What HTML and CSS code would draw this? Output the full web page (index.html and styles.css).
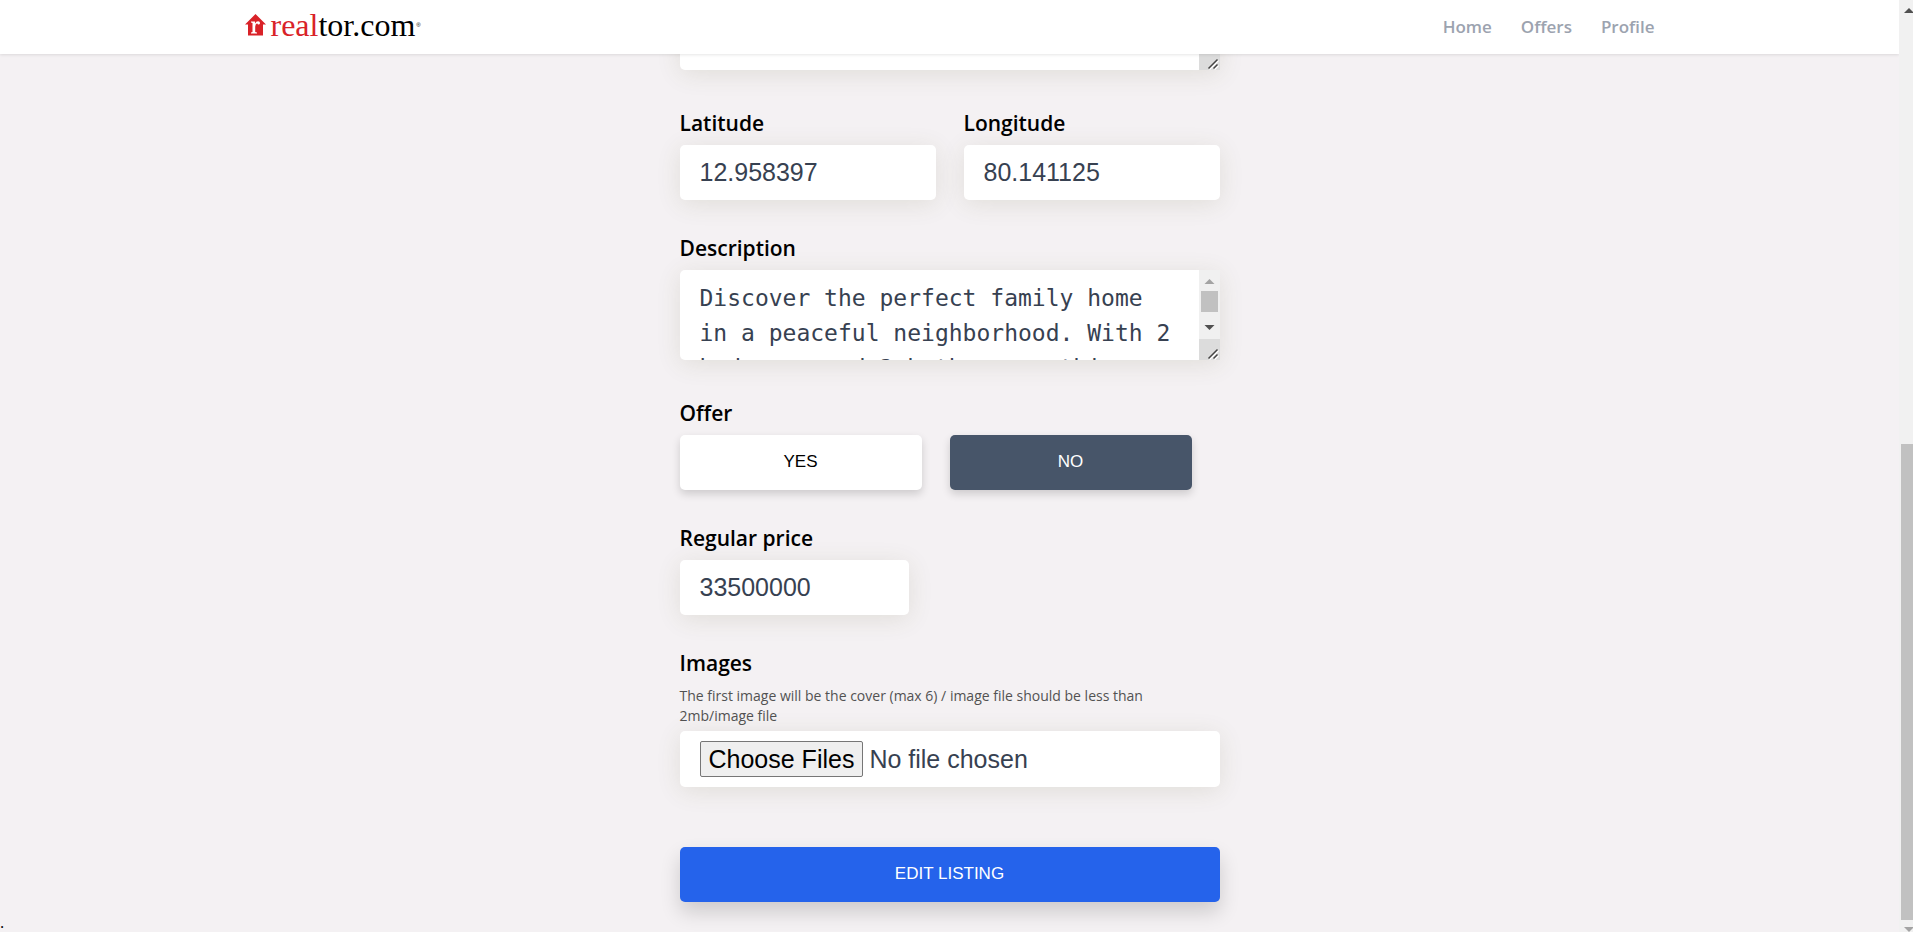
FILE: index.html
```html
<!DOCTYPE html>
<html lang="en">
<head>
<meta charset="utf-8">
<title>Edit listing</title>
<link rel="stylesheet" href="styles.css">
</head>
<body>
<div class="page">
  <header class="header">
    <div class="header-inner">
      <a class="logo" href="#" aria-label="realtor.com">
        <svg class="logo-house" viewBox="0 0 21 22" aria-hidden="true">
          <path fill="#d92228" d="M10.500 0 21 10.500H18V21.500H3V10.500H0Z"/>
          <path fill="#fff" d="M6 7.500H10V9.500Q11.200 7.200 13.200 7.300 15.200 7.500 15 9.300 14.700 10.800 13.200 10.600 12.200 10.300 12.200 9.300 10.200 10 10.200 12.800V18L12 18.500V19.500H6V18.500L7.500 18V9L6 8.500Z"/>
        </svg>
        <span class="logo-text"><span class="logo-red">real</span>tor.com</span><span class="logo-mark">®</span>
      </a>
      <nav class="nav">
        <a href="#">Home</a>
        <a href="#">Offers</a>
        <a href="#">Profile</a>
      </nav>
    </div>
  </header>
  <main class="content">
    <form class="form">
      <div class="area">
        <textarea class="area-text" aria-label="Address"></textarea>
        <div class="area-bar" aria-hidden="true">
          <svg class="grip" viewBox="0 0 21 21"><path d="M9.500 19.500 18.500 10.500M14.500 19.500 18.500 15.500" stroke="#fff" stroke-width="1.500" transform="translate(1 1)"/><path d="M9.500 19.500 18.500 10.500M14.500 19.500 18.500 15.500" stroke="#444" stroke-width="1.500"/></svg>
        </div>
      </div>

      <div class="pair after-area">
        <div class="field">
          <label for="lat">Latitude</label>
          <input class="box" id="lat" type="text" value="12.958397">
        </div>
        <div class="field">
          <label for="lng">Longitude</label>
          <input class="box" id="lng" type="text" value="80.141125">
        </div>
      </div>

      <div class="field">
        <label for="desc">Description</label>
        <div class="area">
          <textarea class="area-text" id="desc">Discover the perfect family home in a peaceful neighborhood. With 2 bedrooms and 2 bathrooms, this</textarea>
          <div class="area-bar" aria-hidden="true">
            <svg class="area-arrow" viewBox="0 0 21 21"><path d="M5.500 14 10.500 9 15.500 14Z" fill="#a3a3a3"/></svg>
            <div class="area-thumb"></div>
            <svg class="area-arrow area-arrow-down" viewBox="0 0 21 21"><path d="M5.500 9 10.500 14 15.500 9Z" fill="#505050"/></svg>
            <svg class="grip" viewBox="0 0 21 21"><path d="M9.500 19.500 18.500 10.500M14.500 19.500 18.500 15.500" stroke="#fff" stroke-width="1.500" transform="translate(1 1)"/><path d="M9.500 19.500 18.500 10.500M14.500 19.500 18.500 15.500" stroke="#444" stroke-width="1.500"/></svg>
          </div>
        </div>
      </div>

      <div class="field after-area">
        <span class="label" id="offer">Offer</span>
        <div class="choices" role="group" aria-labelledby="offer">
          <button class="choice" type="button">YES</button>
          <button class="choice choice-on" type="button">NO</button>
        </div>
      </div>

      <div class="field">
        <label for="price">Regular price</label>
        <input class="box box-price" id="price" type="text" value="33500000">
      </div>

      <div class="field">
        <label for="images">Images</label>
        <p class="hint">The first image will be the cover (max 6) / image file should be less than 2mb/image file</p>
        <input class="box box-file" id="images" type="file" multiple>
      </div>

      <button class="submit" type="submit">EDIT LISTING</button>
    </form>
    <p class="dot">.</p>
  </main>
</div>
<div class="scrollbar" aria-hidden="true">
  <svg class="scroll-arrow" viewBox="0 0 14 21"><path d="M5 13 10 8 15 13Z" fill="#505050"/></svg>
  <div class="scroll-track"><div class="scroll-thumb"></div></div>
  <svg class="scroll-arrow scroll-arrow-down" viewBox="0 0 14 12"><path d="M5 7 10 12 15 7Z" fill="#a3a3a3"/></svg>
</div>
</body>
</html>
```
FILE: styles.css
```css
* {
  box-sizing: border-box;
}

body {
  margin: 0;
  display: grid;
  grid-template-columns: minmax(0, 1fr) 14px;
  height: 100vh;
  overflow: hidden;
  background: #f4f1f3;
  color: #000;
  font-family: "Open Sans", "Noto Sans", sans-serif;
}

.page {
  height: 100vh;
  overflow: hidden;
}

.header {
  position: relative;
  z-index: 1;
  background: #fff;
  box-shadow: 0 1px 3px rgba(0, 0, 0, 0.1);
}

.header-inner {
  display: flex;
  align-items: center;
  justify-content: space-between;
  max-width: 1410px;
  height: 54px;
  margin: 0 auto;
}

.logo {
  display: flex;
  align-items: center;
  gap: 5px;
  padding-bottom: 5px;
  color: #000;
  text-decoration: none;
}

.logo-house {
  width: 21px;
  height: 22px;
}

.logo-text {
  font: 32px/48px "Liberation Serif", serif;
}

.logo-red {
  color: #d92228;
}

.logo-mark {
  margin-left: -4px;
  font: 6px/10px "Liberation Sans", sans-serif;
}

.nav {
  display: flex;
  gap: 29px;
}

.nav a {
  color: #9ca3af;
  font-size: 17px;
  font-weight: 600;
  line-height: 24px;
  text-decoration: none;
}

.form {
  display: flex;
  flex-direction: column;
  gap: 30px;
  width: 540px;
  max-width: 100%;
  margin: -74px auto 0;
}

.field {
  display: flex;
  flex-direction: column;
}

label,
.label {
  padding-top: 1px;
  margin-bottom: 4px;
  font-size: 21px;
  font-weight: 600;
  line-height: 35px;
}

.pair {
  display: grid;
  grid-template-columns: 1fr 1fr;
  gap: 28px;
}

.after-area {
  margin-top: 5px;
}

.box,
.area {
  border: 0;
  border-radius: 5px;
  background: #fff;
  color: #374151;
  box-shadow: 0 4px 24px rgba(90, 90, 40, 0.12);
}

.box {
  width: 100%;
  height: 55px;
  padding: 10px 20px;
  font: 25px/35px "Liberation Sans", Arial, sans-serif;
}

.box-price {
  width: 229px;
}

.box-file {
  height: 56px;
}

.box-file::file-selector-button {
  height: 36px;
  padding: 1px 8px;
  margin-right: 6px;
  border: 1px solid #767676;
  border-radius: 2px;
  background: #efefef;
  color: #000;
  font: 25px/32px "Liberation Sans", Arial, sans-serif;
}

.area {
  display: grid;
  grid-template-columns: 1fr 21px;
  height: 90px;
  overflow: hidden;
  border-radius: 5px 0 0 5px;
}

.area-text {
  height: 90px;
  padding: 11px 20px 0;
  overflow: hidden;
  border: 0;
  background: transparent;
  color: #374151;
  font: 23px/35px "DejaVu Sans Mono", monospace;
  resize: none;
}

.area-bar {
  display: flex;
  flex-direction: column;
  background: #f0f0f0;
}

.area-arrow {
  height: 21px;
}

.area-arrow-down {
  margin-top: 4px;
}

.area-thumb {
  height: 21px;
  margin: 0 2px;
  background: #c1c1c1;
}

.grip {
  height: 21px;
  margin-top: auto;
  background: #dcdcdc;
}

.choices {
  display: grid;
  grid-template-columns: 242px 242px;
  gap: 28px;
}

.choice,
.submit {
  height: 55px;
  padding: 0 20px 1px;
  border: 0;
  border-radius: 5px;
  font: 17px/24px "Liberation Sans", Arial, sans-serif;
}

.choice {
  background: #fff;
  color: #000;
  box-shadow: 0 4px 8px rgba(0, 0, 0, 0.16);
}

.choice-on {
  background: #475569;
  color: #fff;
}

.hint {
  padding-top: 1px;
  margin: 0 0 5px;
  color: #525252;
  font-size: 14px;
  line-height: 20px;
}

.submit {
  margin-top: 30px;
  background: #2563eb;
  color: #fff;
  box-shadow: 0 10px 20px rgba(0, 0, 0, 0.16);
}

.dot {
  margin: 0;
  font-size: 16px;
  line-height: 40px;
}

.scrollbar {
  display: flex;
  flex-direction: column;
  height: 100vh;
  background: #f1f1f1;
}

.scroll-arrow {
  flex: none;
  height: 21px;
}

.scroll-arrow-down {
  height: 12px;
}

.scroll-track {
  display: flex;
  flex: 1;
  align-items: flex-end;
  padding: 0 0 0 2px;
}

.scroll-thumb {
  width: 100%;
  height: 53%;
  background: #c1c1c1;
}
```
